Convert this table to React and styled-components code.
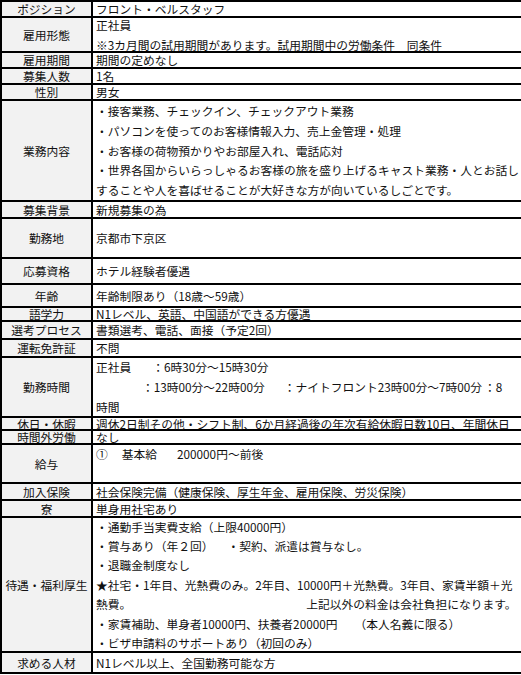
import React from "react";
import styled, { createGlobalStyle } from "styled-components";

const GlobalStyle = createGlobalStyle`
  html, body {
    margin: 0;
    padding: 0;
    background: #ffffff;
    overflow: hidden;
  }
  body {
    font-family: "Noto Sans CJK JP", "Noto Sans", sans-serif;
    color: #111111;
  }
`;

// 表全体（右端は画面外へ続く）
const Table = styled.div`
  width: 540px;
  border-top: 2px solid #000;
  border-left: 2px solid #000;
  font-size: 11.75px;
`;

const Row = styled.div`
  display: grid;
  grid-template-columns: 91px 1fr;
  grid-template-rows: minmax(0, 1fr);
  height: ${(p) => p.$h}px;
  box-sizing: border-box;
  border-bottom: 2px solid #000;
`;

const Label = styled.div`
  display: flex;
  align-items: center;
  justify-content: center;
  min-height: 0;
  background: #f2f2f2;
  border-right: 2px solid #000;
  white-space: nowrap;
  line-height: ${(p) => p.$lh}px;
`;

const Value = styled.div`
  display: flex;
  flex-direction: column;
  justify-content: center;
  padding-left: 3px;
  min-height: 0;
  overflow: ${(p) => (p.$clip ? "hidden" : "visible")};
`;

const Line = styled.div`
  flex: none;
  height: ${(p) => p.$lh}px;
  line-height: ${(p) => p.$lh}px;
  white-space: nowrap;
`;

const Gap = styled.span`
  display: inline-block;
  width: ${(p) => p.$w}px;
`;

const rows = [
  { label: "ポジション", h: 16, lines: ["フロント・ベルスタッフ"] },
  {
    label: "雇用形態",
    h: 35,
    lh: 20,
    lines: ["正社員", "※3カ月間の試用期間があります。試用期間中の労働条件　同条件"],
  },
  { label: "雇用期間", h: 16, lines: ["期間の定めなし"] },
  { label: "募集人数", h: 16, lines: ["1名"] },
  { label: "性別", h: 16, lines: ["男女"] },
  {
    label: "業務内容",
    h: 101,
    lh: 19.7,
    lines: [
      "・接客業務、チェックイン、チェックアウト業務",
      "・パソコンを使ってのお客様情報入力、売上金管理・処理",
      "・お客様の荷物預かりやお部屋入れ、電話応対",
      "・世界各国からいらっしゃるお客様の旅を盛り上げるキャスト業務・人とお話し",
      "することや人を喜ばせることが大好きな方が向いているしごとです。",
    ],
  },
  { label: "募集背景", h: 17, lines: ["新規募集の為"] },
  { label: "勤務地", h: 40, lines: ["京都市下京区"] },
  { label: "応募資格", h: 26, lines: ["ホテル経験者優遇"] },
  { label: "年齢", h: 23, lines: ["年齢制限あり（18歳～59歳）"] },
  { label: "語学力", h: 14, lines: ["N1レベル、英語、中国語ができる方優遇"] },
  { label: "選考プロセス", h: 18, lines: ["書類選考、電話、面接（予定2回）"] },
  { label: "運転免許証", h: 18, lines: ["不問"] },
  {
    label: "勤務時間",
    h: 60,
    lh: 20,
    lines: [
      <>
        正社員
        <Gap $w={21} />
        ：6時30分～15時30分
      </>,
      <>
        <Gap $w={46} />
        ：13時00分～22時00分
        <Gap $w={19} />
        ：ナイトフロント23時00分～7時00分
        <Gap $w={2} />
        ：8
      </>,
      "時間",
    ],
  },
  {
    label: "休日・休暇",
    h: 13,
    lines: ["週休2日制その他・シフト制、6か月経過後の年次有給休暇日数10日、年間休日"],
  },
  { label: "時間外労働", h: 14, lines: ["なし"] },
  {
    label: "給与",
    h: 39,
    lh: 20,
    lines: [
      <>
        ①
        <Gap $w={14} />
        基本給
        <Gap $w={20} />
        200000円～前後
      </>,
      "",
    ],
  },
  {
    label: "加入保険",
    h: 17,
    lines: ["社会保険完備（健康保険、厚生年金、雇用保険、労災保険）"],
  },
  { label: "寮", h: 17, lines: ["単身用社宅あり"] },
  {
    label: "待遇・福利厚生",
    h: 135,
    lh: 19.4,
    clip: true,
    lines: [
      "・通勤手当実費支給（上限40000円）",
      <>
        ・賞与あり（年２回）
        <Gap $w={14} />
        ・契約、派遣は賞与なし。
      </>,
      "・退職金制度なし",
      "★社宅・1年目、光熱費のみ。2年目、10000円＋光熱費。3年目、家賃半額＋光",
      <>
        熱費。
        <Gap $w={175} />
        上記以外の料金は会社負担になります。
      </>,
      <>
        ・家賃補助、単身者10000円、扶養者20000円
        <Gap $w={17} />
        （本人名義に限る）
      </>,
      "・ビザ申請料のサポートあり（初回のみ）",
    ],
  },
  { label: "求める人材", h: 21, lines: ["N1レベル以上、全国勤務可能な方"] },
];

export default function App() {
  return (
    <>
      <GlobalStyle />
      <Table>
        {rows.map((row) => {
          // 低い行は文字の行送りも詰める
          const single = Math.min(14, row.h - 2);
          return (
            <Row key={row.label} $h={row.h}>
              <Label $lh={single}>{row.label}</Label>
              <Value $clip={row.clip}>
                {row.lines.map((text, i) => (
                  <Line key={i} $lh={row.lh || single}>
                    {text}
                  </Line>
                ))}
              </Value>
            </Row>
          );
        })}
      </Table>
    </>
  );
}
